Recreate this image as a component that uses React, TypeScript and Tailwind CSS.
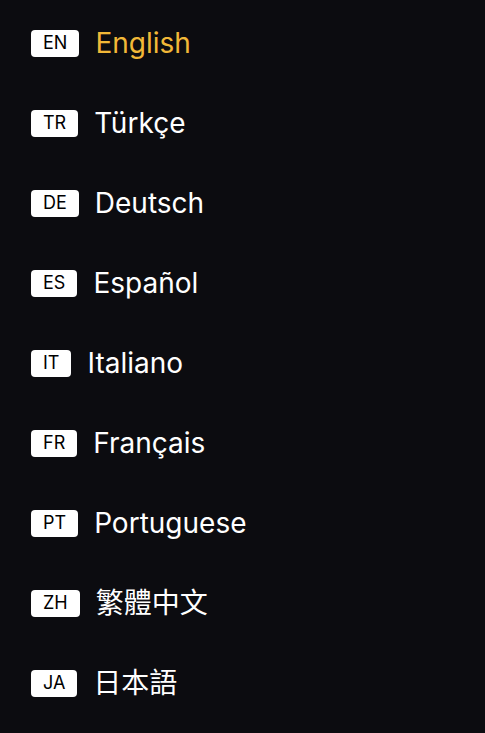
const languages = [
  { code: "EN", label: "English", active: true },
  { code: "TR", label: "Türkçe" },
  { code: "DE", label: "Deutsch" },
  { code: "ES", label: "Español" },
  { code: "IT", label: "Italiano" },
  { code: "FR", label: "Français" },
  { code: "PT", label: "Portuguese" },
  { code: "ZH", label: "繁體中文" },
  { code: "JA", label: "日本語" },
];

export default function App() {
  return (
    <div
      className="h-[733px] w-full bg-[#0c0c10] pt-[3px]"
      style={{ fontFamily: 'Inter, "Noto Sans CJK TC", "Noto Sans CJK JP", sans-serif' }}
    >
      <ul className="flex flex-col">
        {languages.map((lang) => (
          <li key={lang.code} className="flex h-20 items-center gap-4 pl-[31px]">
            <span className="flex h-[27px] items-center rounded bg-white px-3 text-[18px] leading-none text-black">
              {lang.code}
            </span>
            <span
              className={
                "text-[28px] leading-none " +
                (lang.active ? "text-[#f2b838]" : "text-white")
              }
            >
              {lang.label}
            </span>
          </li>
        ))}
      </ul>
    </div>
  );
}
